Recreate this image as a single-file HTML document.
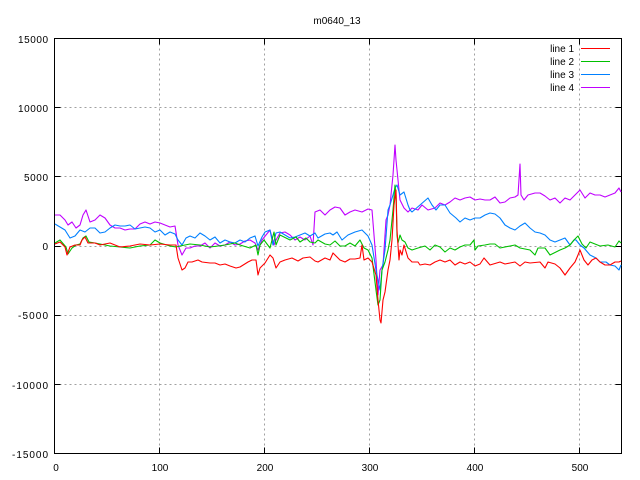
<!DOCTYPE html>
<html><head><meta charset="utf-8"><style>
html,body{margin:0;padding:0;background:#fff;}
svg{display:block;}
text{font-family:"Liberation Sans",sans-serif;font-size:10px;fill:#000;}
</style></head><body>
<svg width="640" height="480" viewBox="0 0 640 480" xmlns="http://www.w3.org/2000/svg">
<rect width="640" height="480" fill="#fff"/>
<g stroke="#a0a0a0" stroke-width="1" stroke-dasharray="2,3" fill="none">
<path d="M54.5 107.5H621.5M54.5 176.5H621.5M54.5 246.5H621.5M54.5 315.5H621.5M54.5 384.5H621.5"/>
<path d="M159.5 38.5V453.5M264.5 38.5V453.5M369.5 38.5V453.5M474.5 38.5V453.5M579.5 38.5V453.5"/>
</g>
<g stroke="#000" stroke-width="1" fill="none">
<path d="M54.5 38.5H621.5V453.5H54.5Z"/>
<path d="M54.5 107.5h6M54.5 176.5h6M54.5 246.5h6M54.5 315.5h6M54.5 384.5h6M621.5 107.5h-6M621.5 176.5h-6M621.5 246.5h-6M621.5 315.5h-6M621.5 384.5h-6"/>
<path d="M159.5 453.5v-6M264.5 453.5v-6M369.5 453.5v-6M474.5 453.5v-6M579.5 453.5v-6M159.5 38.5v6M264.5 38.5v6M369.5 38.5v6M474.5 38.5v6M579.5 38.5v6"/>
</g>
<g text-anchor="end">
<text x="48" y="43" textLength="30">15000</text>
<text x="48" y="112" textLength="30">10000</text>
<text x="48" y="181" textLength="24">5000</text>
<text x="48" y="250">0</text>
<text x="48" y="319" textLength="30">-5000</text>
<text x="48" y="389" textLength="36">-10000</text>
<text x="48" y="458" textLength="36">-15000</text>
</g>
<g text-anchor="middle">
<text x="56" y="471">0</text>
<text x="160" y="471">100</text>
<text x="265" y="471">200</text>
<text x="370" y="471">300</text>
<text x="475" y="471">400</text>
<text x="580" y="471">500</text>
<text x="337" y="24">m0640_13</text>
</g>
<g text-anchor="end">
<text x="574" y="52">line 1</text>
<text x="574" y="65">line 2</text>
<text x="574" y="78">line 3</text>
<text x="574" y="91">line 4</text>
</g>
<g fill="none" stroke-width="1">
<path d="M581 48.5h29" stroke="#ff0000"/>
<path d="M581 61.5h29" stroke="#00c000"/>
<path d="M581 74.5h29" stroke="#0080ff"/>
<path d="M581 87.5h29" stroke="#c000ff"/>
</g>
<g fill="none" stroke-width="1.1" stroke-linejoin="round">
<polyline stroke="#c000ff" points="55,215 60,215 65,220 68,225 72,222 76,228 80,225 83,215 86,210 90,222 95,220 100,215 105,218 110,225 115,228 120,228 125,230 130,229 135,229 140,224 145,222 150,224 155,222 160,223 165,225 170,227 175,226 178,245 182,255 186,248 190,248 195,246 200,246 205,243 210,248 215,243 220,246 225,245 230,242 235,245 240,244 245,241 250,240 255,243 258,250 262,240 266,235 270,230 274,245 276,240 280,233 285,232 290,235 295,240 300,237 305,240 310,236 313,245 315,212 320,210 325,215 330,210 335,207 340,208 345,215 350,212 355,210 362,212 368,209 372,210 376,260 378,295 380,270 383,265 386,220 388,215 390,205 393,175 395,145 396,160 398,180 400,200 404,208 408,212 412,208 418,210 422,205 428,210 435,208 440,203 445,205 450,202 455,198 460,200 465,198 470,197 475,200 480,199 485,200 490,200 495,197 500,203 505,202 510,198 515,197 518,195 520,164 521,195 524,200 528,195 535,193 540,193 545,196 550,200 555,198 560,203 565,198 570,200 575,195 580,190 585,198 590,193 595,195 600,195 605,197 610,195 615,193 619,188 621,192"/>
<polyline stroke="#0080ff" points="55,224 60,227 65,230 70,238 75,236 80,230 85,232 90,228 95,228 100,233 105,232 110,228 115,225 120,226 125,226 130,225 135,229 140,228 145,227 150,228 155,232 160,230 165,235 170,232 175,234 178,240 182,245 186,238 190,236 195,238 200,233 205,236 210,240 215,237 220,243 225,240 230,242 235,243 240,240 245,242 250,238 255,236 258,246 262,237 265,232 270,230 273,245 276,233 280,232 285,235 290,238 295,237 300,235 305,233 310,236 315,233 318,238 325,234 330,233 333,235 337,232 342,240 348,235 355,232 362,230 368,236 372,245 376,270 378,280 380,290 382,270 385,250 388,210 390,205 393,195 395,188 397,185 400,195 404,192 408,205 410,210 412,212 420,205 428,198 432,205 436,210 440,205 445,205 450,213 456,218 460,222 465,218 470,220 475,218 480,218 485,215 490,213 495,214 500,218 505,225 510,228 515,230 520,226 525,223 530,228 535,232 540,233 545,235 550,240 555,242 560,240 565,238 570,245 574,240 576,240 580,245 584,248 590,255 596,258 600,262 606,262 610,265 615,266 619,270 621,265"/>
<polyline stroke="#00c000" points="55,243 60,240 66,247 68,254 72,248 76,245 80,244 83,238 86,236 89,242 95,243 100,244 110,246 120,247 130,248 140,246 150,245 155,240 160,243 170,246 176,247 180,246 185,245 190,244 200,245 210,247 218,246 225,245 235,243 240,245 250,248 256,245 258,255 260,245 264,240 270,248 274,232 276,245 280,235 284,237 290,240 296,237 300,242 306,238 310,242 315,243 318,240 325,244 330,245 335,241 340,246 345,246 350,243 355,246 360,240 364,248 368,250 372,258 376,290 378,305 380,300 382,270 385,262 388,250 390,240 393,210 395,185 396,195 397,235 398,243 400,235 402,240 405,242 408,248 412,250 418,248 425,246 430,250 435,245 440,247 445,252 450,248 455,250 460,247 465,245 470,245 474,240 475,250 478,246 485,245 490,244 495,244 500,248 510,246 515,245 520,248 530,250 535,255 538,248 545,248 550,255 560,250 565,248 570,245 574,240 578,236 582,244 586,248 590,242 595,244 600,246 608,245 615,247 619,241 621,243"/>
<polyline stroke="#ff0000" points="55,244 60,242 65,247 67,255 70,247 75,245 80,245 82,240 85,237 88,243 95,243 100,245 110,243 120,247 130,246 140,244 150,245 160,244 170,245 176,245 178,258 182,270 185,268 188,262 192,262 198,260 202,262 210,263 215,263 220,265 225,264 230,266 236,268 240,267 248,262 252,260 256,260 258,275 260,268 265,263 270,255 273,258 276,268 280,262 285,260 292,258 298,261 303,258 310,257 315,261 318,262 325,258 330,260 333,253 340,260 345,262 350,259 355,259 360,258 362,245 364,260 368,258 372,262 376,275 378,300 380,320 381,323 383,300 385,292 388,270 390,260 392,240 394,205 396,190 397,230 399,260 400,250 402,255 404,245 408,258 412,262 418,262 420,265 425,264 430,265 435,262 440,260 445,262 450,260 455,265 460,262 465,264 470,262 475,266 480,264 484,258 490,265 500,262 505,264 510,263 515,262 520,266 525,262 530,263 540,262 545,268 548,262 555,264 560,268 565,275 570,268 575,262 578,255 580,250 584,260 588,265 592,260 596,258 600,262 605,265 610,265 615,262 619,262 621,261"/>
</g>
</svg>
</body></html>
